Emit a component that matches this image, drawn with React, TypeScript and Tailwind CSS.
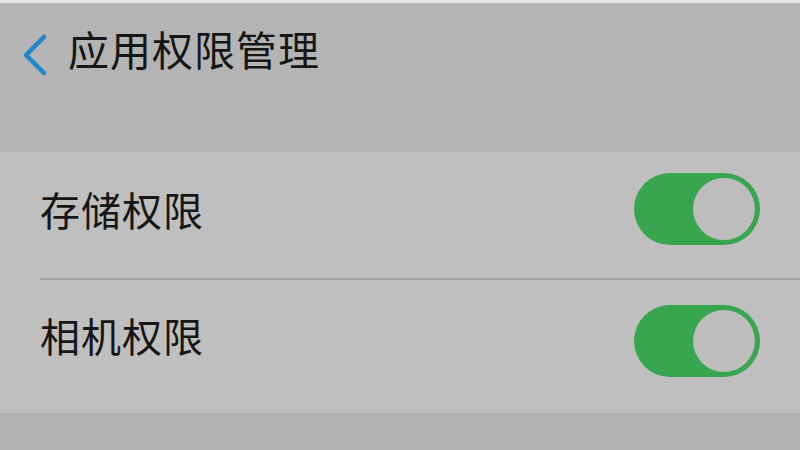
import React, { useState } from 'react';

const Toggle: React.FC<{ on: boolean; onChange: () => void }> = ({ on, onChange }) => (
  <button
    onClick={onChange}
    className={`relative w-[126px] h-[72px] rounded-full p-[5px] flex items-center ${on ? 'bg-[#38a54f] justify-end' : 'bg-[#9a9a9a] justify-start'}`}
  >
    <span className="block w-[62px] h-[62px] rounded-full bg-[#bdbdbd]" />
  </button>
);

export default function App() {
  const [storage, setStorage] = useState(true);
  const [camera, setCamera] = useState(true);

  return (
    <div
      className="w-[800px] h-[450px] overflow-hidden flex flex-col bg-[#b0b0b0] text-[#161616]"
      style={{ fontFamily: '"Noto Sans CJK SC", "Noto Sans", sans-serif' }}
    >
      <div className="h-[3px] bg-[#e4e4e4]" />
      <div className="h-[149px] bg-[#b4b4b4] flex items-start pl-[20px] pt-[25px] gap-[18px]">
        <svg width="30" height="44" viewBox="0 0 30 44" fill="none" className="mt-[5px]">
          <path d="M24 4 L6 22 L24 40" stroke="#1f86cc" strokeWidth="4.5" strokeLinecap="round" strokeLinejoin="round" />
        </svg>
        <span className="text-[41px] leading-none tracking-[1px]">应用权限管理</span>
      </div>
      <div className="bg-[#bfbfbf] flex flex-col">
        <div className="h-[126px] flex items-start justify-between pl-[40px] pr-[40px]">
          <span className="mt-[37px] text-[40px] leading-none tracking-[1px]">存储权限</span>
          <div className="mt-[21px]">
            <Toggle on={storage} onChange={() => setStorage(!storage)} />
          </div>
        </div>
        <div className="ml-[40px] h-[2px] bg-[#a4a4a4]" />
        <div className="h-[133px] flex items-start justify-between pl-[40px] pr-[40px]">
          <span className="mt-[35px] text-[40px] leading-none tracking-[1px]">相机权限</span>
          <div className="mt-[25px]">
            <Toggle on={camera} onChange={() => setCamera(!camera)} />
          </div>
        </div>
      </div>
      <div className="flex-1 bg-[#b1b1b1]" />
    </div>
  );
}
